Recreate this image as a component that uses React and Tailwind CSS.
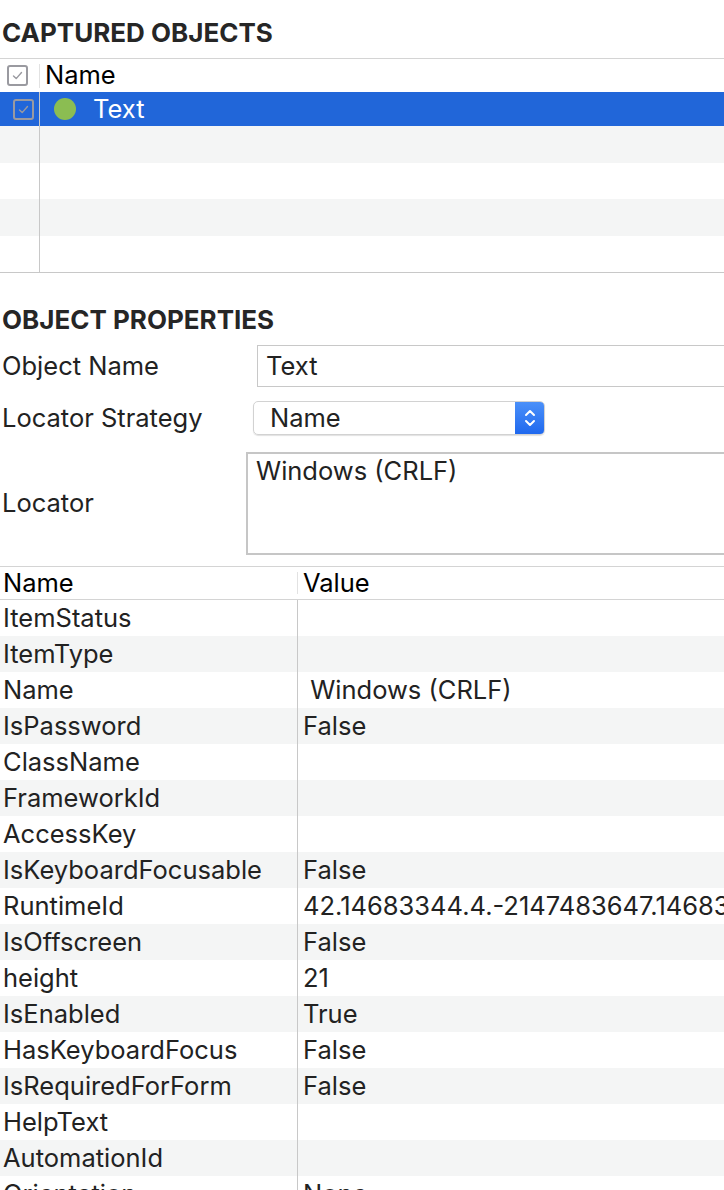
import React from 'react';

const font = { fontFamily: 'Inter, "Noto Sans", sans-serif' };

const props = [
  ['ItemStatus', ''],
  ['ItemType', ''],
  ['Name', ' Windows (CRLF)'],
  ['IsPassword', 'False'],
  ['ClassName', ''],
  ['FrameworkId', ''],
  ['AccessKey', ''],
  ['IsKeyboardFocusable', 'False'],
  ['RuntimeId', '42.14683344.4.-2147483647.14683344.-2'],
  ['IsOffscreen', 'False'],
  ['height', '21'],
  ['IsEnabled', 'True'],
  ['HasKeyboardFocus', 'False'],
  ['IsRequiredForForm', 'False'],
  ['HelpText', ''],
  ['AutomationId', ''],
  ['Orientation', 'None'],
];

const emptyRows = [
  'h-[37px] bg-[#f4f5f5]',
  'h-[36px] bg-white',
  'h-[37px] bg-[#f4f5f5]',
  'h-[36px] bg-white',
];

const Check = () => (
  <div className="flex h-[21px] w-[21px] items-center justify-center rounded-[3px] border-2 border-[#9a9aa0]">
    <svg width="13" height="13" viewBox="0 0 13 13" fill="none">
      <path d="M2.5 7 L5.2 9.6 L10.5 3.5" stroke="#9a9aa0" strokeWidth="1.4" strokeLinecap="round" strokeLinejoin="round" />
    </svg>
  </div>
);

const Chevrons = () => (
  <svg width="14" height="22" viewBox="0 0 14 22" fill="none">
    <path d="M3 8 L7 4 L11 8" stroke="white" strokeWidth="2" strokeLinecap="round" strokeLinejoin="round" />
    <path d="M3 14 L7 18 L11 14" stroke="white" strokeWidth="2" strokeLinecap="round" strokeLinejoin="round" />
  </svg>
);

export default function App() {
  return (
    <div className="h-[1190px] w-[724px] overflow-hidden bg-white text-[25.5px] text-[#222]" style={font}>
      {/* Captured objects */}
      <div className="h-[58px] whitespace-nowrap pl-[2px] pt-[20px] text-[26px] font-bold leading-none text-[#262626]">
        CAPTURED OBJECTS
      </div>
      <div className="border-t border-[#d4d4d4]">
        <div className="flex h-[33px] items-center">
          <div className="flex w-[39px] shrink-0 items-center pl-[7px]">
            <Check />
          </div>
          <div className="h-[24px] w-px bg-[#e2e2e2]" />
          <div className="pl-[5px] text-black">Name</div>
        </div>
        <div className="flex h-[34px] items-center bg-[#2166d9]">
          <div className="flex h-full w-[39px] shrink-0 items-center pl-[13px]">
            <Check />
          </div>
          <div className="h-full w-px bg-[#c8c8c8]" />
          <div className="ml-[14px] h-[22px] w-[22px] rounded-full bg-[#8bbd52]" />
          <div className="pl-[17px] text-white">Text</div>
        </div>
        {emptyRows.map((cls, i) => (
          <div key={i} className={`flex ${cls}`}>
            <div className="w-[39px] shrink-0" />
            <div className="h-full w-px bg-[#c8c8c8]" />
          </div>
        ))}
      </div>
      <div className="border-t border-[#c8c8c8]" />

      {/* Object properties */}
      <div className="h-[72px] whitespace-nowrap pl-[2px] pt-[34px] text-[26px] font-bold leading-none text-[#262626]">
        OBJECT PROPERTIES
      </div>
      <div className="flex flex-col">
        <div className="flex h-[42px] items-center">
          <div className="w-[257px] shrink-0 pl-[2px]">Object Name</div>
          <div className="flex h-[42px] flex-1 items-center border border-r-0 border-[#c8c8c8] pl-[8px]">
            Text
          </div>
        </div>
        <div className="mt-[14px] flex h-[34px] items-center">
          <div className="w-[253px] shrink-0 pl-[2px]">Locator Strategy</div>
          <div className="flex h-[34px] w-[292px] items-center overflow-hidden rounded-[5px] border border-[#d2d2d2] shadow-[0_1px_1px_rgba(0,0,0,0.12)]">
            <div className="flex-1 pl-[16px]">Name</div>
            <div className="flex h-full w-[29px] items-center justify-center bg-gradient-to-b from-[#4b90f9] to-[#1f68ee]">
              <Chevrons />
            </div>
          </div>
        </div>
        <div className="mt-[17px] flex h-[103px] items-center">
          <div className="w-[246px] shrink-0 pl-[2px]">Locator</div>
          <div className="h-[103px] flex-1 border-2 border-r-0 border-[#c6c6c6] pl-[8px] pt-[2px] leading-[30px]">
            Windows (CRLF)
          </div>
        </div>
      </div>
      <div className="mt-[11px] border-t border-[#d4d4d4]" />

      {/* Properties table */}
      <div className="flex h-[33px] items-center border-b border-[#d4d4d4]">
        <div className="w-[297px] shrink-0 pl-[3px] text-black">Name</div>
        <div className="h-[22px] w-px bg-[#e2e2e2]" />
        <div className="pl-[5px] text-black">Value</div>
      </div>
      {props.map(([k, v], i) => (
        <div key={k} className={`flex h-[36px] items-center ${i % 2 ? 'bg-[#f4f5f5]' : 'bg-white'}`}>
          <div className="w-[297px] shrink-0 whitespace-nowrap pl-[3px]">{k}</div>
          <div className="h-full w-px shrink-0 bg-[#c8c8c8]" />
          <div className="min-w-0 flex-1 overflow-hidden whitespace-pre pl-[5px]">{v}</div>
        </div>
      ))}
    </div>
  );
}
